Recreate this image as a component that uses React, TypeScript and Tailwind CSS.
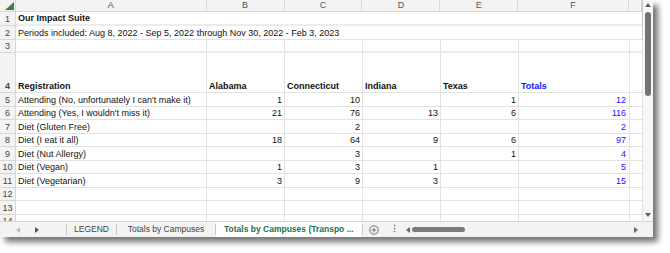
import React from "react";

type Row = {
  n: number;
  h: string;
  label?: string;
  vals?: (number | null)[];
  total?: number | null;
};

const cols = ["A", "B", "C", "D", "E", "F", ""];
const widths = ["w-[191px]", "w-[78px]", "w-[78px]", "w-[78px]", "w-[78px]", "w-[111px]", "w-[13px]"];

const data: Row[] = [
  { n: 5, h: "h-[13.5px]", label: "Attending (No, unfortunately I can't make it)", vals: [1, 10, null, 1], total: 12 },
  { n: 6, h: "h-[13.5px]", label: "Attending (Yes, I wouldn't miss it)", vals: [21, 76, 13, 6], total: 116 },
  { n: 7, h: "h-[13.5px]", label: "Diet (Gluten Free)", vals: [null, 2, null, null], total: 2 },
  { n: 8, h: "h-[13.5px]", label: "Diet (I eat it all)", vals: [18, 64, 9, 6], total: 97 },
  { n: 9, h: "h-[13.5px]", label: "Diet (Nut Allergy)", vals: [null, 3, null, 1], total: 4 },
  { n: 10, h: "h-[13.5px]", label: "Diet (Vegan)", vals: [1, 3, 1, null], total: 5 },
  { n: 11, h: "h-[13.5px]", label: "Diet (Vegetarian)", vals: [3, 9, 3, null], total: 15 },
  { n: 12, h: "h-[13.5px]" },
  { n: 13, h: "h-[13.5px]" },
  { n: 14, h: "h-[13.5px]" },
];

function RowNum({ n, h }: { n: number; h: string }) {
  return (
    <div className={`w-[16px] shrink-0 ${h} bg-[#f3f3f3] border-r border-b border-[#d6d6d6] flex items-end justify-center text-[#444] text-[9px] leading-[12px]`}>
      {n}
    </div>
  );
}

function Cell({ w, h, children, right, className = "" }: { w: string; h: string; children?: React.ReactNode; right?: boolean; className?: string }) {
  return (
    <div
      className={`${w} ${h} shrink-0 border-r border-b border-[#e2e2e2] flex items-end overflow-visible whitespace-nowrap px-[2px] leading-[12px] ${right ? "justify-end" : ""} ${className}`}
    >
      {children}
    </div>
  );
}

function Arrow({ dir, color = "#555" }: { dir: "up" | "down" | "left" | "right"; color?: string }) {
  const pts = {
    up: "0,5 3,1 6,5",
    down: "0,1 3,5 6,1",
    left: "5,0 1,3 5,6",
    right: "1,0 5,3 1,6",
  }[dir];
  return (
    <svg width="6" height="6" viewBox="0 0 6 6">
      <polygon points={pts} fill={color} />
    </svg>
  );
}

export default function App() {
  return (
    <div className="w-[670px] h-[253px] bg-white font-['Liberation_Sans',Arial,sans-serif] text-[9px] text-[#111]">
      <div className="w-[653px] h-[237px] bg-white flex flex-col shadow-[5px_5px_6px_rgba(0,0,0,0.55)]">
        <div className="flex h-[221px] overflow-hidden">
          {/* grid */}
          <div className="w-[643px] flex flex-col border-r border-[#c6c6c6]">
            {/* column headers */}
            <div className="flex h-[12px] bg-[#f3f3f3] shrink-0">
              <div className="w-[16px] h-[12px] border-r border-b border-[#d6d6d6] flex items-end justify-end p-[1px]">
                <svg width="9" height="8" viewBox="0 0 9 8">
                  <polygon points="9,0 9,8 0,8" fill="#3f7d4c" />
                </svg>
              </div>
              {cols.map((c, i) => (
                <div key={i} className={`${widths[i]} h-[12px] border-r border-b border-[#d6d6d6] flex items-center justify-center text-[#555] text-[9px]`}>
                  {c}
                </div>
              ))}
            </div>
            {/* row 1 */}
            <div className="flex shrink-0">
              <RowNum n={1} h="h-[14px]" />
              <div className="flex-1 h-[14px] border-b-2 border-[#ececec] flex items-end px-[2px] font-bold leading-[12px]">Our Impact Suite</div>
            </div>
            {/* row 2 */}
            <div className="flex shrink-0">
              <RowNum n={2} h="h-[14px]" />
              <div className="flex-1 h-[14px] border-b border-[#e2e2e2] flex items-end px-[2px] leading-[12px]">
                Periods included: Aug 8, 2022 - Sep 5, 2022 through Nov 30, 2022 - Feb 3, 2023
              </div>
            </div>
            {/* row 3 */}
            <div className="flex shrink-0">
              <RowNum n={3} h="h-[13px]" />
              {widths.map((w, i) => (
                <Cell key={i} w={w} h="h-[13px]" className="border-b-2 border-b-[#ececec]" />
              ))}
            </div>
            {/* row 4 */}
            <div className="flex shrink-0 font-bold">
              <RowNum n={4} h="h-[40px]" />
              <Cell w={widths[0]} h="h-[40px]">Registration</Cell>
              <Cell w={widths[1]} h="h-[40px]">Alabama</Cell>
              <Cell w={widths[2]} h="h-[40px]">Connecticut</Cell>
              <Cell w={widths[3]} h="h-[40px]">Indiana</Cell>
              <Cell w={widths[4]} h="h-[40px]">Texas</Cell>
              <Cell w={widths[5]} h="h-[40px]" className="text-[#1414ff]">Totals</Cell>
              <Cell w={widths[6]} h="h-[40px]" />
            </div>
            {data.map((r) => (
              <div key={r.n} className="flex shrink-0">
                <RowNum n={r.n} h={r.h} />
                <Cell w={widths[0]} h={r.h}>{r.label}</Cell>
                {[0, 1, 2, 3].map((i) => (
                  <Cell key={i} w={widths[i + 1]} h={r.h} right>
                    {r.vals ? r.vals[i] : null}
                  </Cell>
                ))}
                <Cell w={widths[5]} h={r.h} right className="text-[#1414ff] pr-[3px]">
                  {r.total}
                </Cell>
                <Cell w={widths[6]} h={r.h} />
              </div>
            ))}
          </div>
          {/* vertical scrollbar */}
          <div className="w-[10px] bg-[#f7f7f7] flex flex-col items-center">
            <div className="h-[10px] flex items-center">
              <Arrow dir="up" color="#606060" />
            </div>
            <div className="w-[6px] h-[84px] mt-[2px] rounded-full bg-[#737373]" />
            <div className="flex-1" />
            <div className="h-[10px] mb-[1px] flex items-center">
              <Arrow dir="down" color="#606060" />
            </div>
          </div>
        </div>
        {/* sheet tabs */}
        <div className="h-[16px] flex items-stretch bg-[#f3f3f3] border-t border-[#d4d4d4] text-[8.5px] text-[#444]">
          <div className="w-[66px] flex items-center">
            <div className="ml-[15px]">
              <Arrow dir="left" color="#bdbdbd" />
            </div>
            <div className="ml-[13px]">
              <Arrow dir="right" color="#555" />
            </div>
          </div>
          <div className="w-px bg-[#c9c9c9] my-[2px]" />
          <div className="w-[49px] flex items-center justify-center">LEGEND</div>
          <div className="w-px bg-[#c9c9c9] my-[2px]" />
          <div className="w-[98px] flex items-center justify-center">Totals by Campuses</div>
          <div className="w-px bg-[#c9c9c9] my-[2px]" />
          <div className="w-[146px] flex items-center pl-[8px] bg-white font-bold text-[#217346] whitespace-nowrap">
            Totals by Campuses (Transpo ...
          </div>
          <div className="w-px bg-[#c9c9c9] my-[2px]" />
          <div className="w-[21px] flex items-center justify-center">
            <svg width="10" height="10" viewBox="0 0 10 10">
              <circle cx="5" cy="5" r="4.3" fill="none" stroke="#666" strokeWidth="0.9" />
              <path d="M5 2.6v4.8M2.6 5h4.8" stroke="#666" strokeWidth="0.9" />
            </svg>
          </div>
          <div className="w-[20px] flex items-center justify-center text-[#666] font-bold">⋮</div>
          <div className="flex items-center ml-[1px]">
            <Arrow dir="left" color="#666" />
          </div>
          <div className="w-[53px] h-[5px] self-center ml-[1px] rounded-full bg-[#7b7b7b]" />
          <div className="flex-1" />
          <div className="flex items-center mr-[14px]">
            <Arrow dir="right" color="#666" />
          </div>
        </div>
      </div>
    </div>
  );
}
